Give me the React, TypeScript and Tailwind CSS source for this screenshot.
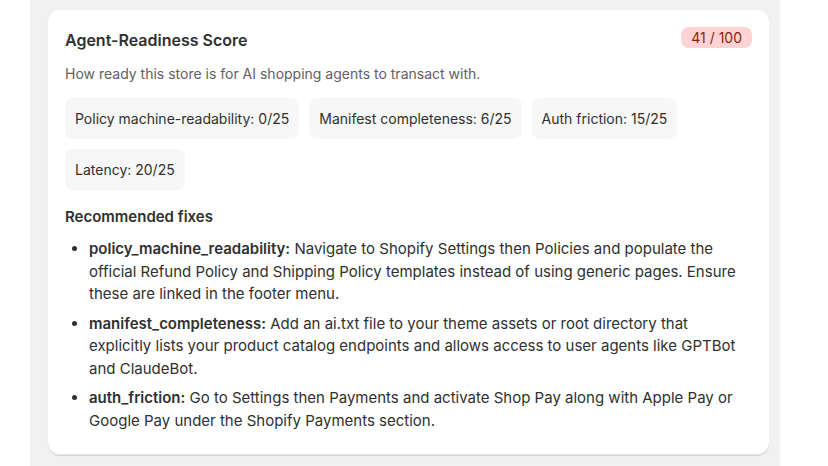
import React from 'react';

type Fix = {
  key: string;
  text: string;
};

const scores = [
  'Policy machine-readability: 0/25',
  'Manifest completeness: 6/25',
  'Auth friction: 15/25',
  'Latency: 20/25',
];

const fixes: Fix[] = [
  {
    key: 'policy_machine_readability',
    text: 'Navigate to Shopify Settings then Policies and populate the official Refund Policy and Shipping Policy templates instead of using generic pages. Ensure these are linked in the footer menu.',
  },
  {
    key: 'manifest_completeness',
    text: 'Add an ai.txt file to your theme assets or root directory that explicitly lists your product catalog endpoints and allows access to user agents like GPTBot and ClaudeBot.',
  },
  {
    key: 'auth_friction',
    text: 'Go to Settings then Payments and activate Shop Pay along with Apple Pay or Google Pay under the Shopify Payments section.',
  },
];

export default function App() {
  return (
    <div className="min-h-[466px] bg-white font-['Inter',sans-serif] text-[#303030]">
      <div className="ml-[30px] w-[750px] min-h-[466px] bg-[#f1f1f1] pl-[18px] pr-[11px] pt-[10px] pb-3">
        <div className="rounded-xl bg-white px-[17px] pt-[18px] pb-[23px] shadow-[0_1px_0_0_rgba(26,26,26,0.07),0_1px_1px_0_rgba(0,0,0,0.06),inset_0_-1px_0_0_#e3e3e3]">
          <div className="flex items-start justify-between">
            <h2 className="text-[16px] font-semibold leading-6">Agent-Readiness Score</h2>
            <span className="mt-[-1px] rounded-lg bg-[#ffd3d3] px-[10px] py-[1px] text-[14px] leading-[19px] text-[#8e1f0b]">
              41 / 100
            </span>
          </div>
          <p className="mt-[12px] text-[14px] leading-5 text-[#616161]">
            How ready this store is for AI shopping agents to transact with.
          </p>
          <div className="mt-[14px] flex flex-wrap gap-[10px]">
            {scores.map((s) => (
              <div key={s} className="rounded-lg bg-[#f7f7f7] px-[10px] py-[11px] text-[14px] leading-[19px]">
                {s}
              </div>
            ))}
          </div>
          <h3 className="mt-[17px] text-[15px] font-semibold leading-5">Recommended fixes</h3>
          <ul className="mt-[11px] list-disc pl-[24px] text-[15px] leading-[22.5px] marker:text-[#303030]">
            {fixes.map((f) => (
              <li key={f.key} className="mb-[7px] last:mb-0">
                <span className="font-semibold">{f.key}:</span> {f.text}
              </li>
            ))}
          </ul>
        </div>
      </div>
    </div>
  );
}
